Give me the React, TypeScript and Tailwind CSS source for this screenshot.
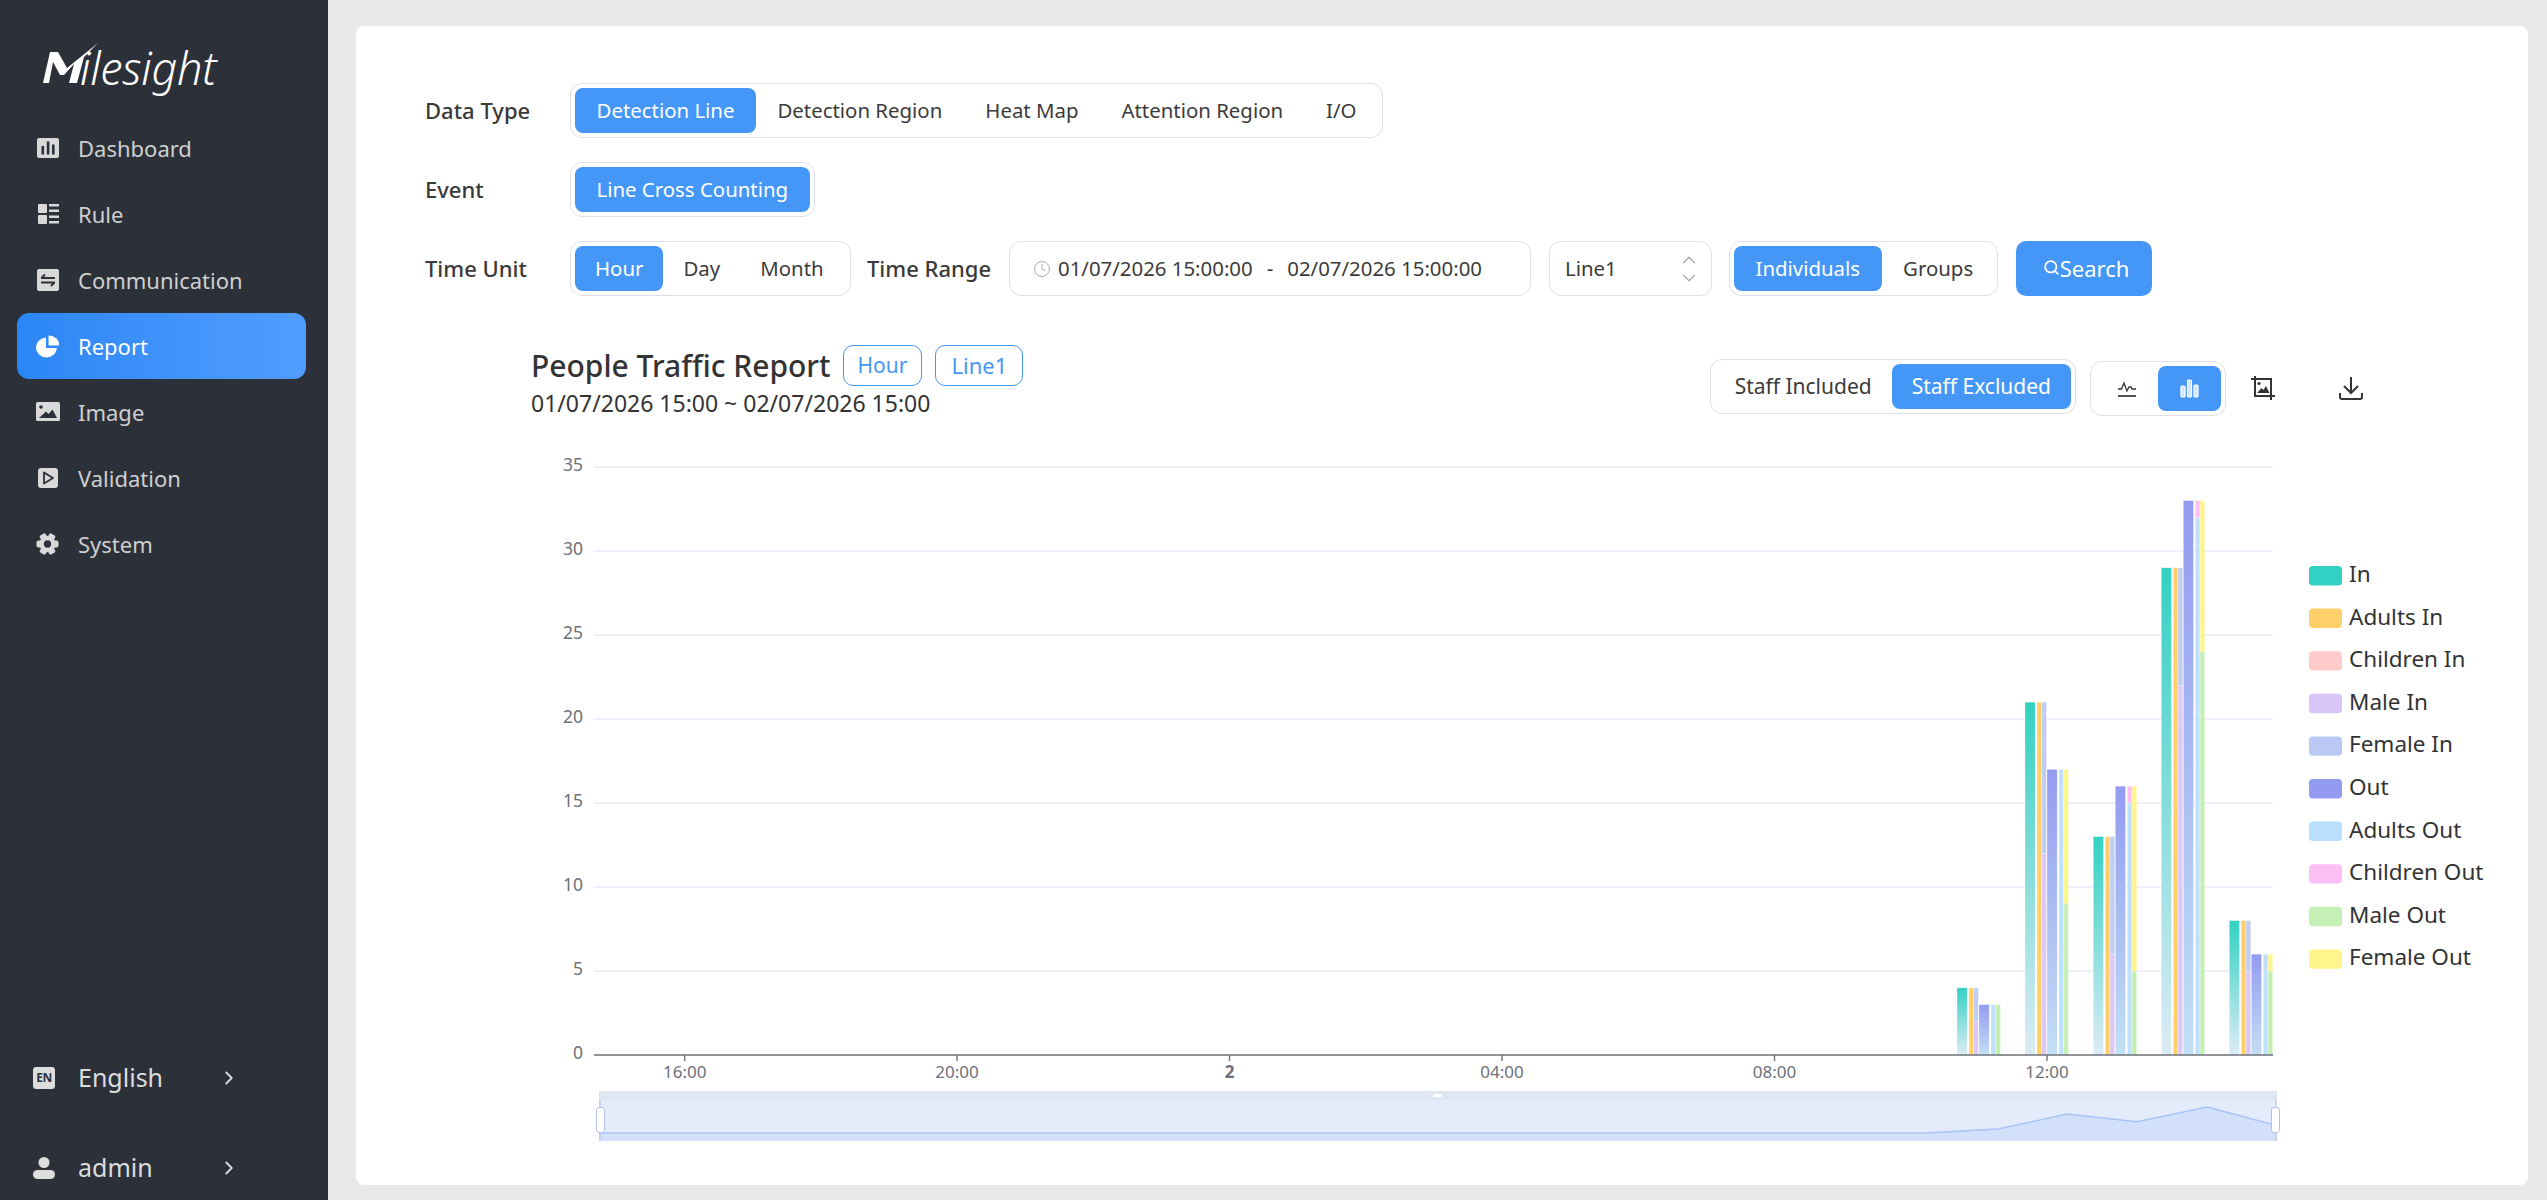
import React from "react";
import { ChevronRight, ChevronUp, ChevronDown, Search, Clock } from "lucide-react";

const ink = "#2c3039";

const DashboardIcon = () => (
  <svg width="22" height="22" viewBox="0 0 22 22">
    <rect x="0" y="1" width="22" height="20" rx="2" fill="#d9d9d9" />
    <rect x="4.5" y="9" width="2.6" height="8.5" fill={ink} />
    <rect x="9.8" y="4.5" width="2.6" height="13" fill={ink} />
    <rect x="15" y="7.5" width="2.6" height="10" fill={ink} />
  </svg>
);

const RuleIcon = () => (
  <svg width="22" height="22" viewBox="0 0 22 22" fill="#d9d9d9">
    <rect x="1" y="1" width="9" height="9" rx="1" />
    <rect x="1" y="12" width="9" height="9" rx="1" />
    <rect x="12" y="1" width="10" height="2.5" />
    <rect x="12" y="6.5" width="10" height="2.5" />
    <rect x="12" y="12.5" width="10" height="2.5" />
    <rect x="12" y="18" width="10" height="2.5" />
  </svg>
);

const CommIcon = () => (
  <svg width="22" height="22" viewBox="0 0 22 22">
    <rect x="0" y="0" width="22" height="22" rx="2" fill="#d9d9d9" />
    <path d="M4 9h14M8 5.5 4.5 9M18 13.5H4M14 17l3.5-3.5" stroke={ink} strokeWidth="1.8" fill="none" />
  </svg>
);

const ReportIcon = () => (
  <svg width="23" height="23" viewBox="0 0 22 22" fill="#fff">
    <path d="M9.5 2.5V12.5H20A10 9.5 0 1 1 9.5 2.5Z" />
    <path d="M12 0.5A10 10 0 0 1 22.5 10H12Z" />
  </svg>
);

const ImageIcon = () => (
  <svg width="24" height="20" viewBox="0 0 24 20">
    <rect x="0" y="0" width="24" height="19" rx="1.5" fill="#d9d9d9" />
    <circle cx="5" cy="5" r="1.8" fill={ink} />
    <path d="M3 16 10 9.5 12.5 12 16.5 7.5 21 16Z" fill={ink} />
  </svg>
);

const ValidationIcon = () => (
  <svg width="20" height="20" viewBox="0 0 20 20">
    <rect x="0" y="0" width="20" height="20" rx="3" fill="#d9d9d9" />
    <path d="M6 4.5 15 10 6 15.5Z" fill="none" stroke={ink} strokeWidth="1.8" strokeLinejoin="round" />
  </svg>
);

const GearIcon = () => (
  <svg width="23" height="22" viewBox="-12 -11.5 24 23">
    <circle r="8.5" fill="#d9d9d9" />
    {[30, 90, 150, 210, 270, 330].map((a) => (
      <rect key={a} x="-3.6" y="-11.5" width="7.2" height="7" rx="2" fill="#d9d9d9" transform={`rotate(${a})`} />
    ))}
    <circle r="3.8" fill={ink} />
  </svg>
);

const EnIcon = () => (
  <span className="flex h-[22px] w-[22px] items-center justify-center rounded-[3px] bg-[#dedede] text-[12px] leading-none font-bold tracking-[-0.5px] text-[#2c3039]">
    EN
  </span>
);

const UserIcon = () => (
  <svg width="22" height="22" viewBox="0 0 22 22" fill="#dedede">
    <circle cx="11" cy="5.5" r="5.5" />
    <rect x="0" y="13" width="22" height="9" rx="4.5" />
  </svg>
);

const menu = [
  { label: "Dashboard", icon: <DashboardIcon /> },
  { label: "Rule", icon: <RuleIcon /> },
  { label: "Communication", icon: <CommIcon /> },
  { label: "Report", icon: <ReportIcon />, active: true },
  { label: "Image", icon: <ImageIcon /> },
  { label: "Validation", icon: <ValidationIcon /> },
  { label: "System", icon: <GearIcon /> },
];

const Logo = () => (
  <div className="flex h-[50px] items-start pl-[40px]">
    <svg width="60" height="42" viewBox="40 41 60 42" fill="#fff" className="shrink-0">
      <path d="M43 82 50 51H58L67 67 98 42 84 56 77 82H69L74 63 64 74H60L53 61 49 82Z" />
    </svg>
    <span className="-ml-[20px] mt-[-4px] font-['Noto_Sans'] text-[45px] leading-[60px] font-light tracking-[-0.3px] text-white italic">
      ilesight
    </span>
  </div>
);

const Sidebar = () => (
  <aside className="flex w-[328px] shrink-0 flex-col bg-[#2c3039] font-['Noto_Sans']">
    <div className="pt-[42px]">
      <Logo />
    </div>
    <nav className="mt-[23px] flex flex-col pr-[22px] pl-[17px]">
      {menu.map((item) => (
        <div
          key={item.label}
          className={`flex h-[66px] items-center rounded-[12px] text-[22px] ${
            item.active
              ? "bg-gradient-to-r from-[#2a86f5] to-[#519dff] text-white"
              : "text-[#cfcfcf]"
          }`}
        >
          <span className="flex w-[61px] shrink-0 justify-center">{item.icon}</span>
          {item.label}
        </div>
      ))}
    </nav>
    <div className="mt-auto flex flex-col gap-[44px] pr-[88px] pb-[9px] pl-[33px] text-[25px] text-[#dcdcdc]">
      {[
        { label: "English", icon: <EnIcon /> },
        { label: "admin", icon: <UserIcon /> },
      ].map((row) => (
        <div key={row.label} className="flex h-[46px] items-center">
          <span className="w-[45px] shrink-0">{row.icon}</span>
          <span className="flex-1">{row.label}</span>
          <ChevronRight size={22} strokeWidth={2} />
        </div>
      ))}
    </div>
  </aside>
);

const Segmented = ({
  items,
  active,
  className = "",
  pad = "px-[21.5px]",
}: {
  items: string[];
  active: string;
  className?: string;
  pad?: string;
}) => (
  <div className={`flex h-[55px] items-center rounded-[12px] border border-[#dfdfe6] bg-white px-[4px] ${className}`}>
    {items.map((item) => (
      <div
        key={item}
        className={`flex h-[45px] items-center rounded-[8px] ${pad} ${
          item === active ? "bg-[#4597f7] text-white" : "text-[#3b3b3b]"
        }`}
      >
        {item}
      </div>
    ))}
  </div>
);

const Label = ({ text, className = "w-[145px]" }: { text: string; className?: string }) => (
  <span className={`text-[22px] font-medium text-[#3a3a3a] ${className}`}>{text}</span>
);

const Filters = () => (
  <div className="flex flex-col gap-[24px] text-[20.4px]">
    <div className="flex items-center">
      <Label text="Data Type" />
      <Segmented
        items={["Detection Line", "Detection Region", "Heat Map", "Attention Region", "I/O"]}
        active="Detection Line"
      />
    </div>
    <div className="flex items-center">
      <Label text="Event" />
      <Segmented items={["Line Cross Counting"]} active="Line Cross Counting" />
    </div>
    <div className="flex items-center">
      <Label text="Time Unit" />
      <Segmented className="w-[281px]" pad="px-[20px]" items={["Hour", "Day", "Month"]} active="Hour" />
      <Label text="Time Range" className="ml-[16px] w-[142px]" />
      <div className="flex h-[55px] w-[522px] items-center rounded-[12px] border border-[#dfdfe6] pl-[23px] text-[#3b3b3b]">
        <Clock size={18} strokeWidth={1.3} className="mr-[7px] text-[#a8abb2]" />
        <span>01/07/2026 15:00:00</span>
        <span className="mx-[14px]">-</span>
        <span>02/07/2026 15:00:00</span>
      </div>
      <div className="ml-[18px] flex h-[55px] w-[163px] items-center justify-between rounded-[12px] border border-[#dfdfe6] pr-[11px] pl-[15px] text-[#3b3b3b]">
        Line1
        <span className="flex flex-col text-[#a8abb2]">
          <ChevronUp size={22} strokeWidth={1.5} className="-mb-[2px]" />
          <ChevronDown size={22} strokeWidth={1.5} className="-mt-[2px]" />
        </span>
      </div>
      <Segmented className="ml-[17px] w-[269px]" items={["Individuals", "Groups"]} active="Individuals" />
      <div className="ml-[18px] flex h-[55px] w-[136px] items-center justify-center rounded-[10px] bg-[#4597f7] pl-[4px] text-[22px] text-white">
        <Search size={17} strokeWidth={2.5} className="mb-[3px]" />
        Search
      </div>
    </div>
  </div>
);

const ChartHeader = () => (
  <div className="mt-[49px] flex h-[95px] items-start justify-between pr-[165px] pl-[175px]">
    <div className="font-['Noto_Sans']">
      <div className="flex items-center">
        <span className="text-[30px] leading-[41px] font-medium text-[#333]">People Traffic Report</span>
        <span className="ml-[12px] flex h-[41px] items-center rounded-[10px] border border-[#4597f7] px-[14px] text-[21px] text-[#4597f7]">
          Hour
        </span>
        <span className="ml-[13px] flex h-[41px] items-center rounded-[10px] border border-[#4597f7] px-[15px] text-[22px] text-[#4597f7]">
          Line1
        </span>
      </div>
      <div className="mt-[2px] text-[23px] leading-[30px] text-[#333]">01/07/2026 15:00 ~ 02/07/2026 15:00</div>
    </div>
    <div className="mt-[14px] flex items-start text-[21px]">
      <Segmented pad="px-[20px]" items={["Staff Included", "Staff Excluded"]} active="Staff Excluded" />
      <div className="mt-[2px] ml-[14px] flex h-[55px] w-[136px] items-center rounded-[12px] border border-[#dfdfe6] px-[4px]">
        <div className="flex h-[45px] w-[64px] items-center justify-center">
          <svg width="18" height="16" viewBox="0 0 18 16" fill="none" stroke="#333" strokeWidth="1.3">
            <path d="M0 8h3.5l2.5-6 3 8 2-4h2l1 2h4" />
            <path d="M0 15h18" strokeWidth="1.7" />
          </svg>
        </div>
        <div className="flex h-[45px] w-[64px] items-center justify-center rounded-[8px] bg-[#4597f7]">
          <svg width="19" height="19" viewBox="0 0 19 19" fill="#fff" fillOpacity="0.75" stroke="#fff" strokeWidth="1.2">
            <rect x="1" y="7" width="4" height="11" rx="1" />
            <rect x="7.5" y="1" width="4" height="17" rx="1" />
            <rect x="14" y="6" width="4" height="12" rx="1" />
          </svg>
        </div>
      </div>
      <svg width="24" height="24" viewBox="0 0 24 24" fill="none" stroke="#333" strokeWidth="2" className="mt-[17px] ml-[25px]">
        <path d="M4 0v20h20M0 3h20v21" />
        <circle cx="8" cy="7.5" r="1.6" fill="#333" stroke="none" />
        <path d="M6 17l4.5-5 2 2 2.5-4 3.5 7Z" fill="#333" stroke="none" />
      </svg>
      <svg width="24" height="24" viewBox="0 0 24 24" fill="none" stroke="#333" strokeWidth="2" className="mt-[17px] ml-[64px]">
        <path d="M12 1v15M5 10l7 7 7-7M1 17v4a2 2 0 0 0 2 2h18a2 2 0 0 0 2-2v-4" />
      </svg>
    </div>
  </div>
);

const Y0 = 1055;
const unit = 16.8;
const y = (v: number) => Y0 - v * unit;

// x0, in, adults in, male in, female in, out, adults out, children out, male out, female out
const groups = [
  [1957, 4, 4, 2, 2, 3, 3, 0, 3, 0],
  [2025, 21, 21, 12, 9, 17, 17, 0, 9, 8],
  [2093.3, 13, 13, 6, 7, 16, 15, 1, 5, 11],
  [2161.3, 29, 29, 22, 7, 33, 32, 1, 24, 9],
  [2229.3, 8, 8, 5, 3, 6, 6, 0, 5, 1],
];

const legend = [
  ["In", "#33d1c3"],
  ["Adults In", "#ffd06a"],
  ["Children In", "#ffcaca"],
  ["Male In", "#d8c4f7"],
  ["Female In", "#b9c9f3"],
  ["Out", "#939bf0"],
  ["Adults Out", "#b9dfff"],
  ["Children Out", "#fdbff3"],
  ["Male Out", "#c4f0b5"],
  ["Female Out", "#fff58a"],
];

const Bar = ({ x, w, from, to, fill }: { x: number; w: number; from: number; to: number; fill: string }) =>
  to > from ? (
    <rect x={x} y={y(to)} width={w} height={(to - from) * unit} fill={fill} stroke="#fff" strokeOpacity="0.35" strokeWidth="0.8" />
  ) : null;

const Chart = () => (
  <svg width="2172" height="720" viewBox="356 440 2172 720" className="block font-['Noto_Sans']">
    <defs>
      <linearGradient id="inFill" x1="0" y1="0" x2="0" y2="1">
        <stop offset="0" stopColor="#33d1c3" />
        <stop offset="1" stopColor="#dcebf5" />
      </linearGradient>
      <linearGradient id="outFill" x1="0" y1="0" x2="0" y2="1">
        <stop offset="0" stopColor="#939bf0" />
        <stop offset="1" stopColor="#c2dff4" />
      </linearGradient>
    </defs>

    {[5, 10, 15, 20, 25, 30, 35].map((v) => (
      <line key={v} x1="594" x2="2273" y1={y(v)} y2={y(v)} stroke="#e6ebf8" strokeWidth="1.5" />
    ))}
    {[0, 5, 10, 15, 20, 25, 30, 35].map((v) => (
      <text key={v} x="583" y={y(v) + 4} textAnchor="end" fontSize="17.5" fill="#6e7079">
        {v}
      </text>
    ))}

    {groups.map(([x0, inn, ad, mi, fi, out, ao, co, mo, fo]) => (
      <g key={x0}>
        <Bar x={x0} w={10.2} from={0} to={inn} fill="url(#inFill)" />
        <Bar x={x0 + 12} w={4.6} from={0} to={ad} fill="#ffd06a" />
        <Bar x={x0 + 16.8} w={4.6} from={0} to={mi} fill="#dcc8f6" />
        <Bar x={x0 + 16.8} w={4.6} from={mi} to={mi + fi} fill="#c0cdf3" />
        <Bar x={x0 + 22} w={10.2} from={0} to={out} fill="url(#outFill)" />
        <Bar x={x0 + 34} w={4.6} from={0} to={ao} fill="#bfe0ff" />
        <Bar x={x0 + 34} w={4.6} from={ao} to={ao + co} fill="#fdbff3" />
        <Bar x={x0 + 38.8} w={4.6} from={0} to={mo} fill="#c4f0b5" />
        <Bar x={x0 + 38.8} w={4.6} from={mo} to={mo + fo} fill="#fff58a" />
      </g>
    ))}

    <line x1="594" x2="2273" y1={Y0} y2={Y0} stroke="#6e7079" strokeWidth="1.6" />
    {[
      [684.7, "16:00"],
      [957, "20:00"],
      [1229.5, "2"],
      [1502, "04:00"],
      [1774.5, "08:00"],
      [2047, "12:00"],
    ].map(([x, label]) => (
      <g key={label}>
        <line x1={x} x2={x} y1={Y0} y2={Y0 + 6} stroke="#6e7079" strokeWidth="1.4" />
        <text
          x={x}
          y={Y0 + 23}
          textAnchor="middle"
          fontSize="17"
          fontWeight={label === "2" ? 700 : 400}
          fill="#6e7079"
        >
          {label}
        </text>
      </g>
    ))}

    {/* range slider under the axis */}
    <rect x="599" y="1091" width="1678" height="9" fill="#dfe5f1" />
    <rect x="599" y="1100" width="1678" height="41" fill="#e4ebfb" />
    <path
      d="M599 1133H1927L1998 1129L2067 1114L2137 1121.7L2207 1107L2272 1124.3L2277 1125V1141H599Z"
      fill="#d2e0fb"
    />
    <path
      d="M599 1133H1927L1998 1129L2067 1114L2137 1121.7L2207 1107L2272 1124.3"
      fill="none"
      stroke="#a9c3f6"
      strokeWidth="1.4"
    />
    <line x1="600" x2="600" y1="1100" y2="1141" stroke="#c3d0ea" strokeWidth="1.6" />
    <line x1="2276" x2="2276" y1="1100" y2="1141" stroke="#c3d0ea" strokeWidth="1.6" />
    <rect x="1433" y="1094" width="9" height="3" rx="1" fill="#fff" />
    <rect x="596.5" y="1107.5" width="8" height="25" rx="2.5" fill="#fff" stroke="#b4c2e0" />
    <rect x="2271.5" y="1107.5" width="8" height="25" rx="2.5" fill="#fff" stroke="#b4c2e0" />

    {legend.map(([name, color], i) => (
      <g key={name}>
        <rect x="2309" y={566 + i * 42.6} width="33" height="19.4" rx="4" fill={color} />
        <text x="2349" y={582 + i * 42.6} fontSize="22.5" fill="#333">
          {name}
        </text>
      </g>
    ))}
  </svg>
);

export default function App() {
  return (
    <div className="flex h-[1200px] w-full overflow-hidden bg-[#e9e9e9]">
      <Sidebar />
      <main className="min-w-0 flex-1 pt-[26px] pr-[19px] pb-[15px] pl-[28px]">
        <div className="h-full overflow-hidden rounded-[8px] bg-white pt-[57px] font-['Noto_Sans']">
          <div className="pl-[69px]">
            <Filters />
          </div>
          <ChartHeader />
          <Chart />
        </div>
      </main>
    </div>
  );
}
